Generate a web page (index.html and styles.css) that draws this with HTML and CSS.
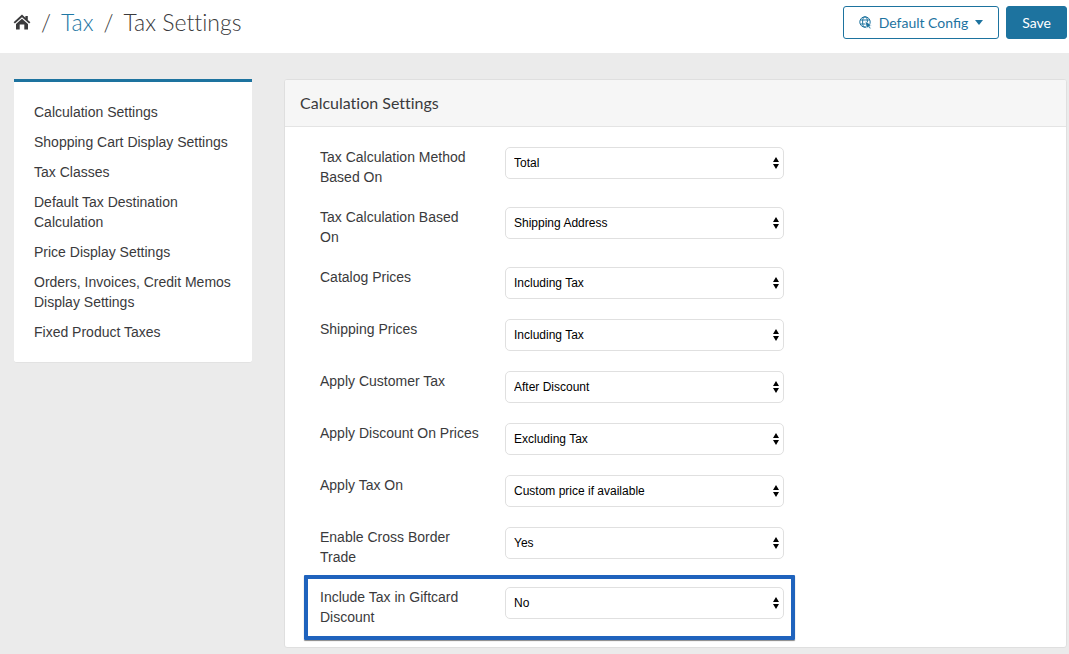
FILE: index.html
```html
<!DOCTYPE html>
<html lang="en">
<head>
<meta charset="utf-8">
<title>Tax Settings</title>
<link rel="stylesheet" href="styles.css">
</head>
<body>
<header class="topbar">
  <nav class="breadcrumb" aria-label="Breadcrumb">
    <a class="home" href="#" aria-label="Home"><svg width="18" height="16" viewBox="0 0 18 16"><path d="M9 0.6 12.4 3.7V2H14.8V5.9L17.4 8.3 16.1 9.6 9 3.2 1.9 9.6 0.6 8.3Z"/><path d="M9 4.7 15 10V15.6H11.3V10.4H6.7V15.6H3V10Z"/></svg></a>
    <span class="sep">/</span>
    <a class="crumb" href="#">Tax</a>
    <span class="sep">/</span>
    <h1 class="current">Tax Settings</h1>
  </nav>
  <div class="actions">
    <button class="btn btn-outline" type="button">
      <svg class="globe" width="13" height="13" viewBox="0 0 13 13"><g fill="none" stroke="currentColor"><circle cx="6" cy="6" r="5.2"/><ellipse cx="6" cy="6" rx="2.4" ry="5.2"/><path d="M1.3 4H10.7M1.3 8H10.7"/></g><path d="M6 5 12.6 9.2 10.6 10 12.2 12.4 10.9 13 9.4 10.9 7.6 12.4Z" fill="currentColor" stroke="#fff" stroke-width=".7"/></svg>
      <span>Default Config</span>
      <svg width="8" height="5" viewBox="0 0 8 5"><path d="M0 0H8L4 5Z" fill="currentColor"/></svg>
    </button>
    <button class="btn btn-primary" type="button">Save</button>
  </div>
</header>
<main class="content">
  <nav class="sidebar" aria-label="Settings sections">
    <a href="#">Calculation Settings</a>
    <a href="#">Shopping Cart Display Settings</a>
    <a href="#">Tax Classes</a>
    <a href="#">Default Tax Destination Calculation</a>
    <a href="#">Price Display Settings</a>
    <a href="#">Orders, Invoices, Credit Memos Display Settings</a>
    <a href="#">Fixed Product Taxes</a>
  </nav>
  <section class="panel">
    <h2 class="panel-title">Calculation Settings</h2>
    <form class="fields">
      <div class="field"><label for="method">Tax Calculation Method Based On</label><div class="select"><select id="method"><option>Total</option></select><svg class="arrows" viewBox="0 0 6 12"><path d="M3 0 6 5H0ZM0 7H6L3 12Z"/></svg></div></div>
      <div class="field"><label for="based">Tax Calculation Based On</label><div class="select"><select id="based"><option>Shipping Address</option></select><svg class="arrows" viewBox="0 0 6 12"><path d="M3 0 6 5H0ZM0 7H6L3 12Z"/></svg></div></div>
      <div class="field"><label for="catalog">Catalog Prices</label><div class="select"><select id="catalog"><option>Including Tax</option></select><svg class="arrows" viewBox="0 0 6 12"><path d="M3 0 6 5H0ZM0 7H6L3 12Z"/></svg></div></div>
      <div class="field"><label for="shipping">Shipping Prices</label><div class="select"><select id="shipping"><option>Including Tax</option></select><svg class="arrows" viewBox="0 0 6 12"><path d="M3 0 6 5H0ZM0 7H6L3 12Z"/></svg></div></div>
      <div class="field"><label for="customer">Apply Customer Tax</label><div class="select"><select id="customer"><option>After Discount</option></select><svg class="arrows" viewBox="0 0 6 12"><path d="M3 0 6 5H0ZM0 7H6L3 12Z"/></svg></div></div>
      <div class="field"><label for="discount">Apply Discount On Prices</label><div class="select"><select id="discount"><option>Excluding Tax</option></select><svg class="arrows" viewBox="0 0 6 12"><path d="M3 0 6 5H0ZM0 7H6L3 12Z"/></svg></div></div>
      <div class="field"><label for="taxon">Apply Tax On</label><div class="select"><select id="taxon"><option>Custom price if available</option></select><svg class="arrows" viewBox="0 0 6 12"><path d="M3 0 6 5H0ZM0 7H6L3 12Z"/></svg></div></div>
      <div class="field"><label for="border">Enable Cross Border<br>Trade</label><div class="select"><select id="border"><option>Yes</option></select><svg class="arrows" viewBox="0 0 6 12"><path d="M3 0 6 5H0ZM0 7H6L3 12Z"/></svg></div></div>
      <div class="field highlighted"><label for="giftcard">Include Tax in Giftcard Discount</label><div class="select"><select id="giftcard"><option>No</option></select><svg class="arrows" viewBox="0 0 6 12"><path d="M3 0 6 5H0ZM0 7H6L3 12Z"/></svg></div></div>
    </form>
  </section>
</main>
</body>
</html>
```
FILE: styles.css
```css
* { box-sizing: border-box; }
body {
  margin: 0;
  background: #ebebeb;
  color: #3a3a3c;
  font: 14px/20px "Liberation Sans", Arial, sans-serif;
}
a { color: inherit; text-decoration: none; }
svg { display: block; }
.topbar {
  display: flex;
  justify-content: space-between;
  align-items: flex-start;
  padding: 6px 2px 14px 13px;
  background: #fff;
}
.breadcrumb {
  display: flex;
  align-items: center;
  gap: 10px;
  font: 300 23px/32px Lato, sans-serif;
  font-variant-ligatures: none;
}
.home { fill: #3a3a3c; }
.crumb { color: #1f77a4; }
.current { margin: 0; font: inherit; }
.actions { display: flex; gap: 7px; }
.btn {
  display: flex;
  align-items: center;
  gap: 7px;
  height: 33px;
  padding: 0 15px;
  border: 1px solid #1d739f;
  border-radius: 3px;
  font: 14px/20px Lato, sans-serif;
}
.btn-outline { background: #fff; color: #1d739f; }
.btn-primary { background: #1d739f; color: #fff; }
.content {
  display: grid;
  grid-template-columns: 238px 1fr;
  align-items: start;
  gap: 32px;
  padding: 26px 2px 6px 14px;
}
.sidebar {
  display: flex;
  flex-direction: column;
  gap: 10px;
  padding: 20px 15px 20px 20px;
  border: 1px solid #e2e2e2;
  border-width: 3px 0 1px;
  border-top-color: #1d739f;
  border-radius: 0 0 3px 3px;
  background: #fff;
}
.panel {
  border: 1px solid #dfdfdf;
  border-radius: 3px;
  background: #fff;
}
.panel-title {
  margin: 0;
  padding: 13px 15px;
  border-bottom: 1px solid #e4e4e4;
  border-radius: 2px 2px 0 0;
  background: #f6f6f6;
  font: 400 16px/20px Lato, sans-serif;
  font-variant-ligatures: none;
}
.fields {
  display: flex;
  flex-direction: column;
  gap: 20px;
  padding: 20px 35px;
}
.field {
  display: grid;
  grid-template-columns: 159px 279px;
  column-gap: 26px;
  align-items: start;
  width: max-content;
}
.select { position: relative; }
.select select {
  appearance: none;
  display: block;
  width: 100%;
  height: 32px;
  padding: 0 24px 0 8px;
  border: 1px solid #e0e0e0;
  border-radius: 5px;
  background: #fff;
  color: #000;
  font: 12px/20px "Liberation Sans", Arial, sans-serif;
}
.arrows {
  position: absolute;
  top: 10px;
  right: 5px;
  width: 6px;
  height: 12px;
  pointer-events: none;
}
.highlighted { position: relative; }
.highlighted::after {
  content: "";
  position: absolute;
  inset: -12px -11px -13px -16px;
  border: 4px solid #1f63bd;
  border-radius: 1px;
  box-shadow: 0 1px 1px #888;
  pointer-events: none;
}
```
